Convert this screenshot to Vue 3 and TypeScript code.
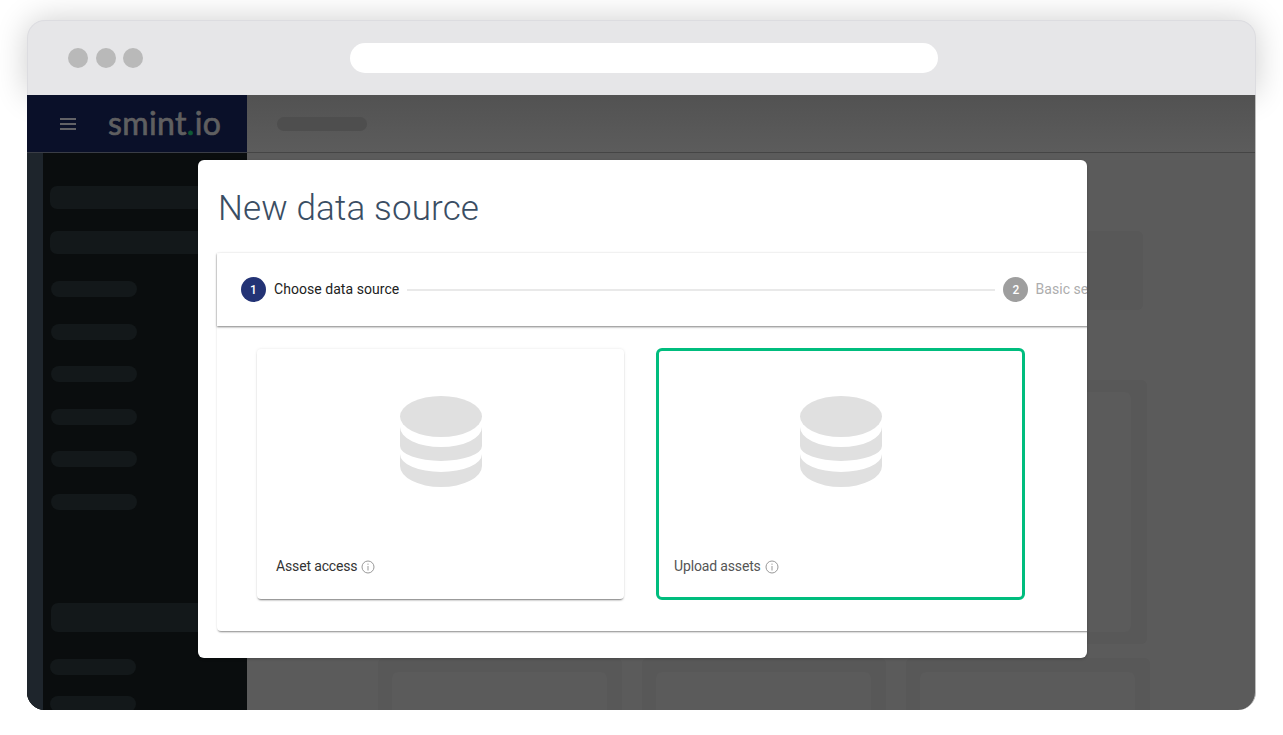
<template>
  <div class="page">
    <div class="frame">
      <div class="chrome">
        <div class="dots">
          <span class="dot"></span>
          <span class="dot"></span>
          <span class="dot"></span>
        </div>
        <div class="address"></div>
      </div>

      <div class="body">
        <aside class="sidebar">
          <div class="brand">
            <svg class="menu" width="16" height="12" viewBox="0 0 16 12">
              <rect y="0" width="16" height="2" />
              <rect y="5" width="16" height="2" />
              <rect y="10" width="16" height="2" />
            </svg>
            <span class="logo">smint<span class="logo-dot">.</span>io</span>
          </div>
          <div class="side-body">
            <div class="strip"></div>
            <nav class="nav">
              <div class="bar wide"></div>
              <div class="bar wide second"></div>
              <div class="pills">
                <div v-for="n in 6" :key="n" class="bar pill"></div>
              </div>
              <div class="bar large"></div>
              <div class="bar pill low"></div>
              <div class="bar pill lower"></div>
            </nav>
          </div>
        </aside>

        <main class="main">
          <div class="topbar">
            <div class="crumb"></div>
          </div>
          <div class="content">
            <div class="panel-top"></div>
            <div class="panel-mid">
              <div class="panel-inner"></div>
            </div>
            <div class="panel-row">
              <div v-for="n in 3" :key="n" class="tile">
                <div class="tile-inner"></div>
              </div>
            </div>
          </div>
        </main>
      </div>

      <section class="modal">
        <h1 class="title">New data source</h1>
        <div class="stepper">
          <header class="steps">
            <div class="step">
              <span class="num active">1</span>
              <span class="step-label">Choose data source</span>
            </div>
            <div class="line"></div>
            <div class="step">
              <span class="num">2</span>
              <span class="step-label muted">Basic settings</span>
            </div>
          </header>
          <div class="options">
            <article
              v-for="o in options"
              :key="o.label"
              class="option"
              :class="{ selected: o.selected }"
            >
              <svg class="db" width="82" height="91" viewBox="0 0 82 91">
                <ellipse cx="41" cy="20.5" rx="41" ry="20.5" />
                <path d="M0 31A41 20 0 0 0 82 31V50A41 15 0 0 1 0 50Z" />
                <path d="M0 58A41 18 0 0 0 82 58V70A41 21 0 0 1 0 70Z" />
              </svg>
              <div class="option-label">
                <span>{{ o.label }}</span>
                <svg class="info" width="14" height="14" viewBox="0 0 14 14">
                  <circle cx="7" cy="7" r="6" />
                  <line x1="7" y1="6" x2="7" y2="10.5" />
                  <line x1="7" y1="3.6" x2="7" y2="4.8" />
                </svg>
              </div>
            </article>
          </div>
        </div>
      </section>
    </div>
  </div>
</template>

<script setup lang="ts">
interface DataOption {
  label: string
  selected: boolean
}

const options: DataOption[] = [
  { label: 'Asset access', selected: false },
  { label: 'Upload assets', selected: true },
]
</script>

<style>
html,
body {
  background: #fff;
}
</style>

<style scoped>
.page {
  height: 735px;
  padding: 20px 0 0 27px;
  box-sizing: border-box;
  overflow: hidden;
  font-family: Roboto, "Liberation Sans", sans-serif;
}

.frame {
  position: relative;
  width: 1229px;
  height: 690px;
}

.chrome {
  position: relative;
  display: flex;
  align-items: center;
  height: 75px;
  padding-left: 40px;
  box-sizing: border-box;
  background: #e6e6e8;
  border: 1px solid #dcdce0;
  border-bottom: 0;
  border-radius: 18px 18px 0 0;
  box-shadow: 0 0 32px rgba(0, 0, 0, 0.2);
}

.dots {
  display: flex;
  gap: 7.5px;
}

.dot {
  width: 20px;
  height: 20px;
  border-radius: 50%;
  background: #b9b9b9;
}

.address {
  width: 588px;
  height: 30px;
  margin-left: 207px;
  margin-top: -1px;
  border-radius: 15px;
  background: #fff;
}

.body {
  position: relative;
  display: flex;
  height: 615px;
  overflow: hidden;
  border-radius: 0 0 18px 18px;
  background: #5b5b5b;
  border-right: 1px solid #bdbdbd;
  box-sizing: border-box;
}

.sidebar {
  width: 220px;
  flex-shrink: 0;
  display: flex;
  flex-direction: column;
  background: #0a0d0e;
}

.brand {
  display: flex;
  align-items: center;
  flex-shrink: 0;
  height: 58px;
  padding-left: 33px;
  box-sizing: border-box;
  background: #0a1029;
  border-bottom: 1px solid #3a3d46;
}

.menu {
  fill: #626266;
}

.logo {
  margin-left: 32px;
  margin-top: -1px;
  font-family: Lato, sans-serif;
  font-size: 32px;
  font-weight: 400;
  line-height: 1;
  letter-spacing: 0.35px;
  color: #5f5f60;
  -webkit-text-stroke: 0.7px #5f5f60;
}

.logo-dot {
  color: #0f5a36;
  -webkit-text-stroke: 0.7px #0f5a36;
}

.side-body {
  display: flex;
  flex: 1;
  min-height: 0;
}

.strip {
  width: 16px;
  background: #1e252c;
}

.nav {
  flex: 1;
  padding: 33px 0 0 7px;
  background: #0a0d0e;
}

.bar {
  background: #13181a;
}

.wide {
  width: 170px;
  height: 23px;
  border-radius: 7px;
}

.second {
  margin-top: 22px;
}

.pills {
  display: flex;
  flex-direction: column;
  gap: 26.6px;
  margin-top: 27px;
}

.pill {
  width: 86px;
  height: 16px;
  border-radius: 8px;
  margin-left: 1px;
}

.large {
  width: 170px;
  height: 29px;
  border-radius: 7px;
  margin: 93px 0 0 1px;
}

.low {
  margin-top: 27px;
  margin-left: 0;
}

.lower {
  margin-top: 21px;
  margin-left: 0;
}

.main {
  flex: 1;
  min-width: 0;
}

.topbar {
  display: flex;
  align-items: center;
  height: 58px;
  padding-left: 30px;
  box-sizing: border-box;
  background: linear-gradient(#525252, #5c5c5c);
  border-bottom: 1px solid #454545;
}

.crumb {
  width: 90px;
  height: 14px;
  border-radius: 7px;
  background: #4e4e4e;
}

.content {
  padding: 78px 0 0 131px;
}

.panel-top {
  width: 765px;
  height: 79px;
  border-radius: 6px;
  background: #585858;
}

.panel-mid {
  width: 769px;
  height: 264px;
  margin-top: 70px;
  padding: 12px 16px 12px 14px;
  box-sizing: border-box;
  border-radius: 6px;
  background: #585858;
}

.panel-inner {
  height: 100%;
  border-radius: 6px;
  background: #5b5b5b;
}

.panel-row {
  display: grid;
  grid-template-columns: repeat(3, 244px);
  gap: 20px;
  margin-top: 14px;
}

.tile {
  height: 80px;
  padding: 14px 15px 0 14px;
  box-sizing: border-box;
  border-radius: 6px;
  background: #585858;
}

.tile-inner {
  height: 100%;
  border-radius: 6px 6px 0 0;
  background: #5b5b5b;
}

.modal {
  position: absolute;
  left: 171px;
  top: 140px;
  width: 889px;
  height: 498px;
  overflow: hidden;
  border-radius: 6px;
  background: #fff;
  box-shadow: 0 1px 3px rgba(0, 0, 0, 0.2);
}

.title {
  margin: 0;
  padding: 28px 0 0 20px;
  font-size: 35px;
  font-weight: 300;
  line-height: 42px;
  letter-spacing: 0.15px;
  color: #3a4d63;
}

.stepper {
  width: 931px;
  margin: 23px 0 0 19px;
  border-radius: 4px;
  background: #fff;
  box-shadow: 0 2px 2px -1px rgba(0, 0, 0, 0.45), 0 0 3px rgba(0, 0, 0, 0.06);
}

.steps {
  display: flex;
  align-items: center;
  height: 73px;
  padding: 0 24px;
  box-sizing: border-box;
  box-shadow: 0 1px 2px rgba(0, 0, 0, 0.5);
}

.step {
  display: flex;
  align-items: center;
  gap: 8px;
}

.num {
  display: flex;
  align-items: center;
  justify-content: center;
  width: 25px;
  height: 25px;
  border-radius: 50%;
  background: #9e9e9e;
  color: #fff;
  font-size: 12px;
  font-weight: 500;
}

.num.active {
  background: #233375;
}

.step-label {
  padding-bottom: 2px;
  font-size: 14px;
  letter-spacing: 0.05px;
  color: #212121;
  white-space: nowrap;
}

.step-label.muted {
  margin-left: -1px;
  color: #adadad;
}

.line {
  flex: 1;
  height: 2px;
  margin: 0 8px;
  background: #e9e9e9;
}

.options {
  display: flex;
  align-items: center;
  gap: 32px;
  padding: 22px 0 31px 40px;
}

.option {
  position: relative;
  display: flex;
  flex-direction: column;
  align-items: center;
  width: 367px;
  height: 250px;
  padding-top: 47px;
  box-sizing: border-box;
  border-radius: 4px;
  background: #fff;
  box-shadow: 0 2px 2px -1px rgba(0, 0, 0, 0.5), 0 0 3px rgba(0, 0, 0, 0.1);
}

.option.selected {
  width: 369px;
  height: 252px;
  border: 3px solid #00bd7e;
  border-radius: 6px;
  padding-top: 45px;
  box-shadow: none;
}

.db {
  fill: #e0e0e0;
  flex-shrink: 0;
}

.option-label {
  position: absolute;
  left: 19px;
  top: 207px;
  display: flex;
  align-items: center;
  gap: 4px;
  font-size: 14px;
  line-height: 20px;
  letter-spacing: -0.15px;
  color: #333;
}

.selected .option-label {
  left: 15px;
  top: 205px;
  color: #555;
}

.info {
  margin-top: 2px;
  fill: none;
  stroke: #999;
  stroke-width: 1;
}
</style>
